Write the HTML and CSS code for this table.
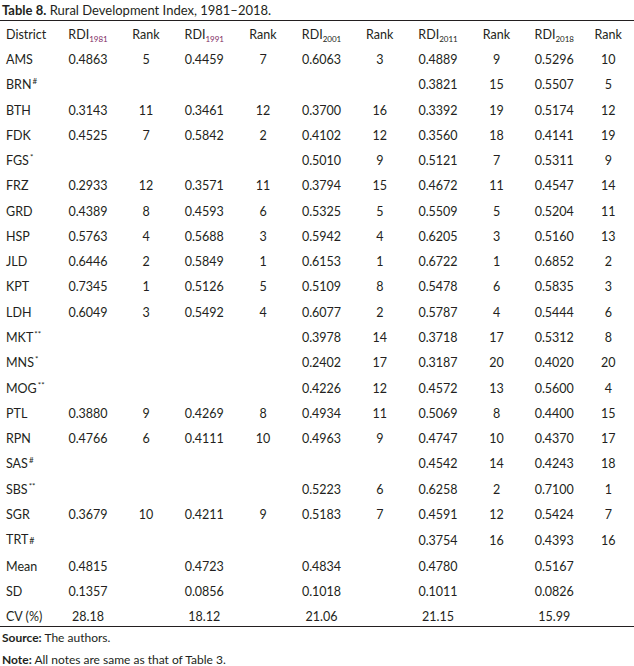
FILE: index.html
```html
<!DOCTYPE html>
<html lang="en">
<head>
<meta charset="utf-8">
<title>Table 8. Rural Development Index, 1981–2018</title>
<link rel="stylesheet" href="styles.css">
</head>
<body>
<div class="page">
  <p class="caption"><b>Table 8.</b> Rural Development Index, 1981–2018.</p>
  <table class="rdi">
    <colgroup>
      <col class="c0"><col class="c1"><col class="c2"><col class="c3"><col class="c4"><col class="c5"><col class="c6"><col class="c7"><col class="c8"><col class="c9"><col class="c10">
    </colgroup>
    <thead>
      <tr>
        <th class="name">District</th>
        <th>RDI<sub class="mark">1981</sub></th>
        <th>Rank</th>
        <th>RDI<sub class="mark">1991</sub></th>
        <th>Rank</th>
        <th>RDI<sub>2001</sub></th>
        <th>Rank</th>
        <th>RDI<sub>2011</sub></th>
        <th>Rank</th>
        <th>RDI<sub>2018</sub></th>
        <th>Rank</th>
      </tr>
    </thead>
    <tbody>
      <tr><td class="name">AMS</td><td>0.4863</td><td>5</td><td>0.4459</td><td>7</td><td>0.6063</td><td>3</td><td>0.4889</td><td>9</td><td>0.5296</td><td>10</td></tr>
      <tr><td class="name">BRN<sup>#</sup></td><td></td><td></td><td></td><td></td><td></td><td></td><td>0.3821</td><td>15</td><td>0.5507</td><td>5</td></tr>
      <tr><td class="name">BTH</td><td>0.3143</td><td>11</td><td>0.3461</td><td>12</td><td>0.3700</td><td>16</td><td>0.3392</td><td>19</td><td>0.5174</td><td>12</td></tr>
      <tr><td class="name">FDK</td><td>0.4525</td><td>7</td><td>0.5842</td><td>2</td><td>0.4102</td><td>12</td><td>0.3560</td><td>18</td><td>0.4141</td><td>19</td></tr>
      <tr><td class="name">FGS<sup>*</sup></td><td></td><td></td><td></td><td></td><td>0.5010</td><td>9</td><td>0.5121</td><td>7</td><td>0.5311</td><td>9</td></tr>
      <tr><td class="name">FRZ</td><td>0.2933</td><td>12</td><td>0.3571</td><td>11</td><td>0.3794</td><td>15</td><td>0.4672</td><td>11</td><td>0.4547</td><td>14</td></tr>
      <tr><td class="name">GRD</td><td>0.4389</td><td>8</td><td>0.4593</td><td>6</td><td>0.5325</td><td>5</td><td>0.5509</td><td>5</td><td>0.5204</td><td>11</td></tr>
      <tr><td class="name">HSP</td><td>0.5763</td><td>4</td><td>0.5688</td><td>3</td><td>0.5942</td><td>4</td><td>0.6205</td><td>3</td><td>0.5160</td><td>13</td></tr>
      <tr><td class="name">JLD</td><td>0.6446</td><td>2</td><td>0.5849</td><td>1</td><td>0.6153</td><td>1</td><td>0.6722</td><td>1</td><td>0.6852</td><td>2</td></tr>
      <tr><td class="name">KPT</td><td>0.7345</td><td>1</td><td>0.5126</td><td>5</td><td>0.5109</td><td>8</td><td>0.5478</td><td>6</td><td>0.5835</td><td>3</td></tr>
      <tr><td class="name">LDH</td><td>0.6049</td><td>3</td><td>0.5492</td><td>4</td><td>0.6077</td><td>2</td><td>0.5787</td><td>4</td><td>0.5444</td><td>6</td></tr>
      <tr><td class="name">MKT<sup>**</sup></td><td></td><td></td><td></td><td></td><td>0.3978</td><td>14</td><td>0.3718</td><td>17</td><td>0.5312</td><td>8</td></tr>
      <tr><td class="name">MNS<sup>*</sup></td><td></td><td></td><td></td><td></td><td>0.2402</td><td>17</td><td>0.3187</td><td>20</td><td>0.4020</td><td>20</td></tr>
      <tr><td class="name">MOG<sup>**</sup></td><td></td><td></td><td></td><td></td><td>0.4226</td><td>12</td><td>0.4572</td><td>13</td><td>0.5600</td><td>4</td></tr>
      <tr><td class="name">PTL</td><td>0.3880</td><td>9</td><td>0.4269</td><td>8</td><td>0.4934</td><td>11</td><td>0.5069</td><td>8</td><td>0.4400</td><td>15</td></tr>
      <tr><td class="name">RPN</td><td>0.4766</td><td>6</td><td>0.4111</td><td>10</td><td>0.4963</td><td>9</td><td>0.4747</td><td>10</td><td>0.4370</td><td>17</td></tr>
      <tr><td class="name">SAS<sup>#</sup></td><td></td><td></td><td></td><td></td><td></td><td></td><td>0.4542</td><td>14</td><td>0.4243</td><td>18</td></tr>
      <tr><td class="name">SBS<sup>**</sup></td><td></td><td></td><td></td><td></td><td>0.5223</td><td>6</td><td>0.6258</td><td>2</td><td>0.7100</td><td>1</td></tr>
      <tr><td class="name">SGR</td><td>0.3679</td><td>10</td><td>0.4211</td><td>9</td><td>0.5183</td><td>7</td><td>0.4591</td><td>12</td><td>0.5424</td><td>7</td></tr>
      <tr><td class="name">TRT<span class="hash">#</span></td><td></td><td></td><td></td><td></td><td></td><td></td><td>0.3754</td><td>16</td><td>0.4393</td><td>16</td></tr>
      <tr><td class="name">Mean</td><td>0.4815</td><td></td><td>0.4723</td><td></td><td>0.4834</td><td></td><td>0.4780</td><td></td><td>0.5167</td><td></td></tr>
      <tr><td class="name">SD</td><td>0.1357</td><td></td><td>0.0856</td><td></td><td>0.1018</td><td></td><td>0.1011</td><td></td><td>0.0826</td><td></td></tr>
      <tr class="last"><td class="name">CV (%)</td><td>28.18</td><td></td><td>18.12</td><td></td><td>21.06</td><td></td><td>21.15</td><td></td><td>15.99</td><td></td></tr>
    </tbody>
  </table>
  <p class="note"><b>Source:</b> The authors.</p>
  <p class="note"><b>Note:</b> All notes are same as that of Table 3.</p>
</div>
</body>
</html>
```

FILE: styles.css
```css
html, body {
  margin: 0;
  padding: 0;
  background: #ffffff;
}

body {
  font-family: Lato, "Open Sans", "Liberation Sans", sans-serif;
  color: #231f20;
}

.page {
  width: 634px;
}

.caption {
  margin: 0;
  padding: 0 0 0 2px;
  font-size: 13px;
  line-height: 20px;
}

.caption b {
  font-weight: 700;
}

.rdi {
  width: 634px;
  table-layout: fixed;
  border-collapse: collapse;
  border-top: 1px solid #231f20;
  border-bottom: 1.5px solid #231f20;
  font-size: 12.5px;
}

.c0 { width: 59px; }
.c1 { width: 58px; }
.c2 { width: 58px; }
.c3 { width: 58.5px; }
.c4 { width: 59px; }
.c5 { width: 58px; }
.c6 { width: 58.5px; }
.c7 { width: 58px; }
.c8 { width: 59px; }
.c9 { width: 56.5px; }
.c10 { width: 51.5px; }

.rdi th,
.rdi td {
  padding: 0;
  text-align: center;
  vertical-align: middle;
  white-space: nowrap;
  font-weight: 400;
  line-height: 16px;
}

.rdi thead th {
  padding-top: 6px;
  padding-bottom: 4.3px;
}

.rdi tbody td {
  padding-top: 4.65px;
  padding-bottom: 4.65px;
}

.rdi tbody .last td {
  padding-bottom: 1px;
}

.rdi .name {
  text-align: left;
  padding-left: 6px;
}

.rdi sub {
  font-size: 8px;
  vertical-align: -3px;
  line-height: 0;
}

.rdi sub.mark {
  color: #7e2a63;
}

.rdi sup {
  font-size: 8px;
  vertical-align: 5px;
  line-height: 0;
  margin-left: 1px;
}

.rdi .hash {
  font-size: 9px;
  margin-left: 1px;
}

.note {
  margin: 0;
  padding-left: 2px;
  font-size: 12px;
  line-height: 22px;
}

.note b {
  font-weight: 700;
}
```
